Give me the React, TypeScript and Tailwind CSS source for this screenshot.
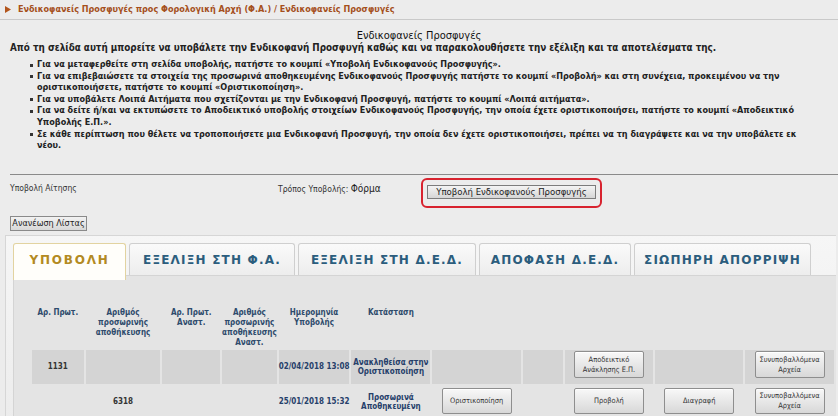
const COLS = ['w-[52px]', 'w-[75px]', 'w-[58px]', 'w-[49px]', 'w-[71px]', 'w-[79px]', 'w-[89px]', 'w-[40px]', 'w-[89px]', 'w-[88px]', 'w-[89px]']

const HEADERS: string[][] = [
  ['Αρ. Πρωτ.'],
  ['Αριθμός', 'προσωρινής', 'αποθήκευσης'],
  ['Αρ. Πρωτ.', 'Αναστ.'],
  ['Αριθμός', 'προσωρινής', 'αποθήκευσης', 'Αναστ.'],
  ['Ημερομηνία', 'Υποβολής'],
  ['Κατάσταση'],
  [],
  [],
  [],
  [],
  [],
]

const TABS = [
  { label: 'ΥΠΟΒΟΛΗ', cls: 'w-[113px]', active: true },
  { label: 'ΕΞΕΛΙΞΗ ΣΤΗ Φ.Α.', cls: 'w-[166px]' },
  { label: 'ΕΞΕΛΙΞΗ ΣΤΗ Δ.Ε.Δ.', cls: 'w-[178px]' },
  { label: 'ΑΠΟΦΑΣΗ Δ.Ε.Δ.', cls: 'w-[152px]' },
  { label: 'ΣΙΩΠΗΡΗ ΑΠΟΡΡΙΨΗ', cls: 'w-[177px]' },
]

const BULLETS: string[][] = [
  ['Για να μεταφερθείτε στη σελίδα υποβολής, πατήστε το κουμπί «Υποβολή Ενδικοφανούς Προσφυγής».'],
  [
    'Για να επιβεβαιώσετε τα στοιχεία της προσωρινά αποθηκευμένης Ενδικοφανούς Προσφυγής πατήστε το κουμπί «Προβολή» και στη συνέχεια, προκειμένου να την',
    'οριστικοποιήσετε, πατήστε το κουμπί «Οριστικοποίηση».',
  ],
  ['Για να υποβάλετε Λοιπά Αιτήματα που σχετίζονται με την Ενδικοφανή Προσφυγή, πατήστε το κουμπί «Λοιπά αιτήματα».'],
  [
    'Για να δείτε ή/και να εκτυπώσετε το Αποδεικτικό υποβολής στοιχείων Ενδικοφανούς Προσφυγής, την οποία έχετε οριστικοποιήσει, πατήστε το κουμπί «Αποδεικτικό',
    'Υποβολής Ε.Π.».',
  ],
  [
    'Σε κάθε περίπτωση που θέλετε να τροποποιήσετε μια Ενδικοφανή Προσφυγή, την οποία δεν έχετε οριστικοποιήσει, πρέπει να τη διαγράψετε και να την υποβάλετε εκ',
    'νέου.',
  ],
]

function CellButton({ lines, tall }: { lines: string[]; tall?: boolean }) {
  return (
    <button
      className={`mx-auto flex w-[70px] flex-col items-center justify-center rounded-[2px] border border-[#8e8e8e] bg-linear-to-b from-[#f8f8f8] to-[#d8d8d8] text-[7.4px] leading-[10px] text-[#333] shadow-[inset_0_1px_0_#fff] ${tall ? 'h-[27px]' : 'h-[26px]'}`}
    >
      {lines.map((l) => (
        <span key={l}>{l}</span>
      ))}
    </button>
  )
}

export default function App() {
  return (
    <div className="h-[416px] w-[838px] overflow-hidden bg-[#ececec] font-['DejaVu_Sans_Condensed','DejaVu_Sans',sans-serif] text-[#222]">
      {/* breadcrumb */}
      <div className="flex h-[20px] items-center border-b border-[#c9c9c9] pl-[5px]">
        <svg width="6" height="7" viewBox="0 0 6 7" className="mr-[7px]">
          <polygon points="0,0 6,3.5 0,7" fill="#b2551c" />
        </svg>
        <span className="text-[9px] font-bold text-[#a5501d]">
          Ενδικοφανείς Προσφυγές προς Φορολογική Αρχή (Φ.Α.) / Ενδικοφανείς Προσφυγές
        </span>
      </div>

      <h1 className="mt-[10px] text-center text-[11px] leading-[12px] text-[#111]">Ενδικοφανείς Προσφυγές</h1>
      <p className="pl-[10px] text-[9.8px] font-bold leading-[12px] whitespace-nowrap">
        Από τη σελίδα αυτή μπορείτε να υποβάλετε την Ενδικοφανή Προσφυγή καθώς και να παρακολουθήσετε την εξέλιξη και τα αποτελέσματα της.
      </p>

      <ul className="mt-[5px] pl-[30px] text-[9px] font-bold leading-[11.6px] whitespace-nowrap">
        {BULLETS.map((lines, i) => (
          <li key={i} className="flex">
            <span className="mt-[4.5px] mr-[4px] h-[3px] w-[3px] shrink-0 bg-[#333]" />
            <span>
              {lines.map((l, j) => (
                <span key={j} className="block">
                  {l}
                </span>
              ))}
            </span>
          </li>
        ))}
      </ul>

      <div className="mt-[22px] ml-[10px] h-px bg-[#8a8a8a]" />

      {/* submission row */}
      <div className="mt-[3px] flex items-start pl-[10px] text-[8.5px] text-[#333]">
        <span className="mt-[4px] w-[268px]">Υποβολή Αίτησης</span>
        <span className="mt-[3px] w-[143px]">
          Τρόπος Υποβολής: <span className="text-[10px] text-[#222]">Φόρμα</span>
        </span>
        <div className="rounded-[6px] border-2 border-[#d8232f] px-[4px] pt-[5px] pb-[7px]">
          <button className="h-[14px] w-[169px] border border-[#7c7c7c] bg-linear-to-b from-[#f4f4f4] to-[#d6d6d6] text-[9.5px] leading-[12px] text-[#222]">
            Υποβολή Ενδικοφανούς Προσφυγής
          </button>
        </div>
      </div>

      <button className="mt-[8px] ml-[10px] h-[15px] w-[77px] border border-[#8a8a8a] bg-linear-to-b from-[#f2f2f2] to-[#d8d8d8] text-[9px] leading-[12px] text-[#222]">
        Ανανέωση Λίστας
      </button>

      {/* tabs container */}
      <div className="mt-[2px] ml-[5px] w-[831px] border-t border-l border-[#d6d6d6] bg-linear-to-b from-[#f6f6f6] to-[#ececec] pt-[7px] pl-[7px]">
        <div className="flex items-start gap-[3px]">
          {TABS.map((t) =>
            t.active ? (
              <div
                key={t.label}
                className={`relative z-10 -mb-[5px] flex h-[37px] items-center justify-center rounded-t-[3px] border border-b-0 border-[#e2d3a0] bg-[#fffefa] pb-[5px] font-['DejaVu_Sans',sans-serif] text-[12px] font-bold tracking-[1.8px] text-[#b38a22] ${t.cls}`}
              >
                {t.label}
              </div>
            ) : (
              <div
                key={t.label}
                className={`flex h-[32px] items-center justify-center rounded-t-[3px] border border-b-0 border-[#cfcfcf] bg-linear-to-b from-[#fafafa] to-[#ededed] font-['DejaVu_Sans',sans-serif] text-[12px] font-bold tracking-[1.2px] text-[#2b5d7d] ${t.cls}`}
              >
                {t.label}
              </div>
            ),
          )}
        </div>

        {/* panel */}
        <div className="h-[150px] border-t border-l border-[#d4d4d4] bg-[#e4e4e4] pt-[30px] pl-[16px]">
          <table className="table-fixed border-separate border-spacing-[2px] text-[8px] leading-[10px]">
            <colgroup>
              {COLS.map((c, i) => (
                <col key={i} className={c} />
              ))}
            </colgroup>
            <thead>
              <tr>
                {HEADERS.map((h, i) => (
                  <th key={i} className="h-[40px] p-0 align-top font-bold text-[#2e4b6c]">
                    {h.map((l, j) => (
                      <div key={j}>{l}</div>
                    ))}
                  </th>
                ))}
              </tr>
            </thead>
            <tbody className="font-bold">
              <tr className="h-[34px]">
                <td className="bg-[#d4d4d4] text-center text-[#333]">1131</td>
                <td className="bg-[#d4d4d4]" />
                <td className="bg-[#d4d4d4]" />
                <td className="bg-[#d4d4d4]" />
                <td className="bg-[#d4d4d4] text-center text-[#26406a]">02/04/2018 13:08</td>
                <td className="bg-[#d4d4d4] text-center leading-[9.5px] text-[#26406a]">
                  Ανακληθείσα στην
                  <br />
                  Οριστικοποίηση
                </td>
                <td className="bg-[#d4d4d4]" />
                <td className="bg-[#d4d4d4]" />
                <td className="bg-[#d4d4d4] pt-[1px] align-top font-normal">
                  <CellButton lines={['Αποδεικτικό', 'Ανάκλησης Ε.Π.']} tall />
                </td>
                <td className="bg-[#d4d4d4]" />
                <td className="bg-[#d4d4d4] pt-[1px] align-top font-normal">
                  <CellButton lines={['Συνυποβαλλόμενα', 'Αρχεία']} tall />
                </td>
              </tr>
              <tr className="h-[32px]">
                <td />
                <td className="text-center text-[#333]">6318</td>
                <td />
                <td />
                <td className="text-center text-[#26406a]">25/01/2018 15:32</td>
                <td className="text-center leading-[9.5px] text-[#26406a]">
                  Προσωρινά
                  <br />
                  Αποθηκευμένη
                </td>
                <td className="pt-[2px] align-top font-normal">
                  <CellButton lines={['Οριστικοποίηση']} />
                </td>
                <td />
                <td className="pt-[2px] align-top font-normal">
                  <CellButton lines={['Προβολή']} />
                </td>
                <td className="pt-[2px] align-top font-normal">
                  <CellButton lines={['Διαγραφή']} />
                </td>
                <td className="pt-[2px] align-top font-normal">
                  <CellButton lines={['Συνυποβαλλόμενα', 'Αρχεία']} />
                </td>
              </tr>
            </tbody>
          </table>
        </div>
      </div>
    </div>
  )
}
